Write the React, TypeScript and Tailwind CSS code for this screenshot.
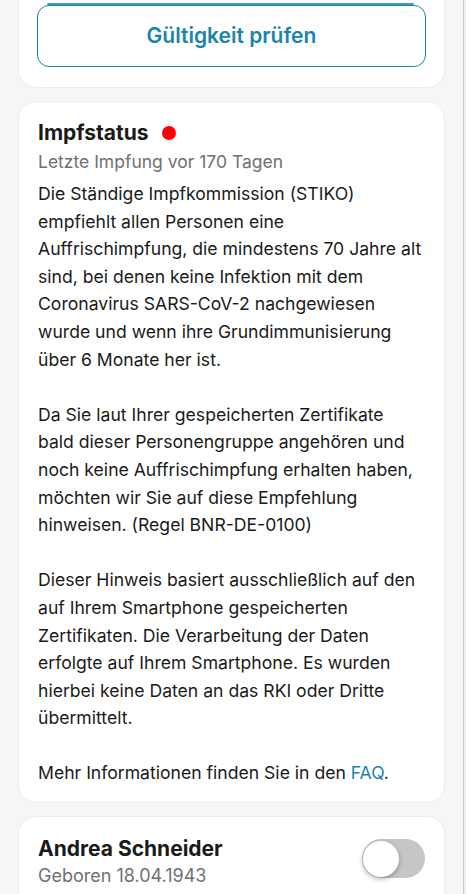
import React from "react";

const font = { fontFamily: "Inter, 'Noto Sans', sans-serif" };

export default function App() {
  return (
    <div className="flex h-[894px] w-[466px] overflow-hidden bg-[#f6f6f6]" style={font}>
      <div className="flex w-[463px] flex-col gap-[13px] px-[18px]">
        {/* Card 1 (scrolled, top cut) */}
        <div className="relative -mt-[25px] rounded-[18px] border border-[#ececec] bg-white px-[18px] pb-[20px] pt-[29px]">
          <div className="absolute left-[28px] right-[30px] top-[27px] h-[2px] rounded-full bg-[#3d9cbe]" />
          <button className="relative flex h-[62px] w-full items-center justify-center rounded-[12px] border border-[#1a84ab] bg-white text-[21px] font-semibold text-[#1a84ab]">
            Gültigkeit prüfen
          </button>
        </div>

        {/* Card 2 */}
        <div className="rounded-[18px] border border-[#ececec] bg-white pb-[15px] pl-[19px] pr-[20px] pt-[17px]">
          <div className="flex items-center gap-[13px]">
            <span className="text-[21px] font-bold leading-[28px] text-[#1a1a1a]">Impfstatus</span>
            <span className="h-[14px] w-[14px] rounded-full bg-[#ff0000]" />
          </div>
          <div className="mt-[3px] text-[17.5px] leading-[24px] text-[#707070]">Letzte Impfung vor 170 Tagen</div>
          <div className="mt-[6px] text-[17.6px] leading-[27.6px] text-[#1a1a1a]">
            <p>
              Die Ständige Impfkommission (STIKO) empfiehlt allen Personen eine Auffrischimpfung, die mindestens 70
              Jahre alt sind, bei denen keine Infektion mit dem Coronavirus SARS-CoV-2 nachgewiesen wurde und wenn
              ihre Grundimmunisierung über 6 Monate her ist.
            </p>
            <p className="mt-[27.6px]">
              Da Sie laut Ihrer gespeicherten Zertifikate bald dieser Personengruppe angehören und noch keine
              Auffrischimpfung erhalten haben, möchten wir Sie auf diese Empfehlung hinweisen. (Regel BNR-DE-0100)
            </p>
            <p className="mt-[27.6px]">
              Dieser Hinweis basiert ausschließlich auf den auf Ihrem Smartphone gespeicherten Zertifikaten. Die
              Verarbeitung der Daten erfolgte auf Ihrem Smartphone. Es wurden hierbei keine Daten an das RKI oder
              Dritte übermittelt.
            </p>
            <p className="mt-[27.6px]">
              Mehr Informationen finden Sie in den <span className="text-[#1a84ab]">FAQ</span>.
            </p>
          </div>
        </div>

        {/* Card 3 */}
        <div className="flex items-start justify-between rounded-[18px] border border-[#ececec] bg-white px-[19px] pb-[20px] pt-[18px]">
          <div>
            <div className="text-[21px] font-bold leading-[28px] text-[#1a1a1a]">Andrea Schneider</div>
            <div className="text-[18px] leading-[26px] text-[#707070]">Geboren 18.04.1943</div>
          </div>
          <div className="relative mt-[4px] h-[39px] w-[63px] shrink-0 rounded-full bg-[#c6c6c6]">
            <div className="absolute left-[1px] top-[1.5px] h-[36px] w-[36px] rounded-full bg-white shadow-[0_2px_5px_rgba(0,0,0,0.3)]" />
          </div>
        </div>
      </div>
      <div className="h-full w-[1px] bg-[#cfcfcf]" />
      <div className="h-full w-[2px] bg-[#eeeeee]" />
    </div>
  );
}
